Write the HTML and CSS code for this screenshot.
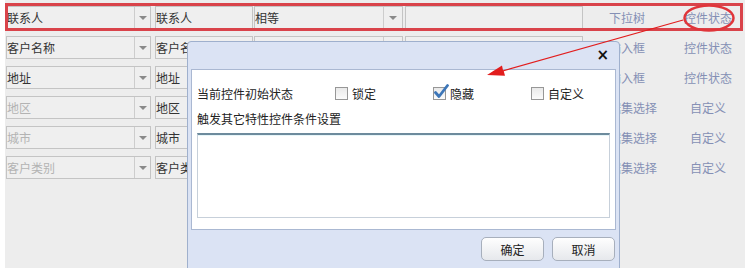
FILE: index.html
```html
<!DOCTYPE html>
<html lang="zh">
<head>
<meta charset="utf-8">
<title>控件状态</title>
<link rel="stylesheet" href="styles.css">
</head>
<body>
<div class="page">
  <div class="rows">
    <div class="row">
      <div class="combo c1"><span class="txt">联系人</span><span class="arr"></span></div>
      <div class="field c2">联系人</div>
      <div class="combo c3"><span class="txt">相等</span><span class="arr"></span></div>
      <div class="field c4"></div>
      <div class="link c5">下拉树</div>
      <div class="link c6">控件状态</div>
    </div>
    <div class="row">
      <div class="combo c1"><span class="txt">客户名称</span><span class="arr"></span></div>
      <div class="field c2">客户名称</div>
      <div class="combo c3"><span class="txt"></span><span class="arr"></span></div>
      <div class="field c4"></div>
      <div class="link c5">输入框</div>
      <div class="link c6">控件状态</div>
    </div>
    <div class="row">
      <div class="combo c1"><span class="txt">地址</span><span class="arr"></span></div>
      <div class="field c2">地址</div>
      <div class="combo c3"><span class="txt"></span><span class="arr"></span></div>
      <div class="field c4"></div>
      <div class="link c5">输入框</div>
      <div class="link c6">控件状态</div>
    </div>
    <div class="row">
      <div class="combo c1 disabled"><span class="txt">地区</span><span class="arr"></span></div>
      <div class="field c2">地区</div>
      <div class="combo c3"><span class="txt"></span><span class="arr"></span></div>
      <div class="field c4"></div>
      <div class="link c5">数据集选择</div>
      <div class="link c6">自定义</div>
    </div>
    <div class="row">
      <div class="combo c1 disabled"><span class="txt">城市</span><span class="arr"></span></div>
      <div class="field c2">城市</div>
      <div class="combo c3"><span class="txt"></span><span class="arr"></span></div>
      <div class="field c4"></div>
      <div class="link c5">数据集选择</div>
      <div class="link c6">自定义</div>
    </div>
    <div class="row">
      <div class="combo c1 disabled"><span class="txt">客户类别</span><span class="arr"></span></div>
      <div class="field c2">客户类别</div>
      <div class="combo c3"><span class="txt"></span><span class="arr"></span></div>
      <div class="field c4"></div>
      <div class="link c5">数据集选择</div>
      <div class="link c6">自定义</div>
    </div>
  </div>

  <div class="dialog">
    <div class="dlg-title"><span class="close">×</span></div>
    <div class="dlg-body">
      <div class="state-line">
        <span class="state-label">当前控件初始状态</span>
        <label class="chk"><span class="box"></span>锁定</label>
        <label class="chk"><span class="box checked"><svg viewBox="0 0 16 16" width="16" height="16"><path d="M2.5 8.5 L6 12.5 L14.5 1.5" fill="none" stroke="#3d76b8" stroke-width="2.8" stroke-linecap="round" stroke-linejoin="round"/></svg></span>隐藏</label>
        <label class="chk"><span class="box"></span>自定义</label>
      </div>
      <div class="trigger-label">触发其它特性控件条件设置</div>
      <div class="textarea"></div>
    </div>
    <div class="dlg-foot">
      <button class="btn">确定</button>
      <button class="btn">取消</button>
    </div>
  </div>

  <svg class="annot" width="750" height="275" viewBox="0 0 750 275">
    <rect x="6.5" y="4.5" width="735" height="25" fill="none" stroke="#d9434a" stroke-width="3"/>
    <ellipse cx="709" cy="18" rx="24.5" ry="12.5" fill="none" stroke="#e0353a" stroke-width="2.5"/>
    <polygon points="487,75 502,65.6 503,70.2 683,19.4 683.3,20.6 503.8,71.2 505,75.8" fill="#e21d1d"/>
  </svg>
</div>
</body>
</html>
```

FILE: styles.css
```css
* { box-sizing: border-box; }
html, body { margin: 0; padding: 0; background: #ffffff; }
body {
  font-family: "Noto Sans CJK SC", "Microsoft YaHei", sans-serif;
  font-size: 12px;
  color: #333;
}
.page {
  position: relative;
  margin-left: 5px;
  width: 740px;
  height: 268px;
  background: #ededed;
  overflow: hidden;
}
.rows {
  display: flex;
  flex-direction: column;
  gap: 7px;
  padding-top: 6px;
}
.row {
  display: flex;
  height: 23px;
}
.row > * { flex-shrink: 0; }
.combo, .field {
  height: 23px;
  border: 1px solid #c4c4c4;
  background: #efefef;
  line-height: 21px;
  white-space: nowrap;
  overflow: hidden;
}
.combo { display: flex; }
.combo .txt { flex: 1; }
.combo .arr {
  width: 16px;
  border-left: 1px solid #cdcdcd;
  display: flex;
  align-items: center;
  justify-content: center;
}
.combo .arr::after {
  content: "";
  border-left: 4px solid transparent;
  border-right: 4px solid transparent;
  border-top: 4px solid #8a8a8a;
}
.c1 { width: 145px; margin-left: 1px; }
.c2 { width: 98px; margin-left: 4px; }
.c3 { width: 149px; margin-left: 1px; }
.c4 { width: 178px; margin-left: 2px; }
.c3 .arr { width: 19px; }
.disabled .txt { color: #b3b3b3; }
.link {
  text-align: center;
  line-height: 23px;
  color: #8590b5;
  white-space: nowrap;
}
.c5 { width: 88px; }
.c6 { width: 74px; }

.dialog {
  position: absolute;
  left: 182px;
  top: 41px;
  width: 433px;
  height: 240px;
  background: #dbe3f4;
  border: 1px solid #9fb0cd;
  border-radius: 4px;
  display: flex;
  flex-direction: column;
}
.dlg-title {
  height: 27px;
  display: flex;
  justify-content: flex-end;
  align-items: center;
  padding-right: 10px;
}
.close {
  font-family: "DejaVu Sans", sans-serif;
  font-weight: bold;
  font-size: 15px;
  color: #111;
  line-height: 1;
}
.dlg-body {
  margin: 0 3px;
  height: 161px;
  background: #ffffff;
  border: 1px solid #aab8d2;
  padding: 12px 4px 0 5px;
}
.state-line {
  display: flex;
  align-items: center;
  height: 22px;
  color: #222;
}
.state-line > * { flex-shrink: 0; }
.state-label { width: 138px; }
.chk {
  width: 98px;
  display: flex;
  align-items: center;
  gap: 4px;
}
.chk:last-child { width: 70px; }
.box {
  position: relative;
  width: 13px;
  height: 13px;
  border: 1px solid #979797;
  background: linear-gradient(#e9e9e9, #fbfbfb);
}
.box.checked svg {
  position: absolute;
  left: -1px;
  top: -4px;
}
.trigger-label {
  margin-top: 6px;
  line-height: 17px;
  color: #222;
}
.textarea {
  margin-top: 6px;
  width: 413px;
  height: 85px;
  border: 1px solid #c7d0da;
  border-top: 2px solid #6d8b9d;
  box-shadow: inset 0 1px 0 #e7f6f9;
}
.dlg-foot {
  display: flex;
  justify-content: flex-end;
  gap: 8px;
  padding: 7px 4px 0 0;
}
.btn {
  width: 63px;
  height: 24px;
  border: 1px solid #a7afbc;
  border-radius: 5px;
  background: linear-gradient(#fefefe, #e6e8ec);
  font-family: "Noto Sans CJK SC", sans-serif;
  font-size: 12px;
  color: #222;
  padding: 0;
}
.annot {
  position: absolute;
  left: -5px;
  top: 0;
  pointer-events: none;
}
```
